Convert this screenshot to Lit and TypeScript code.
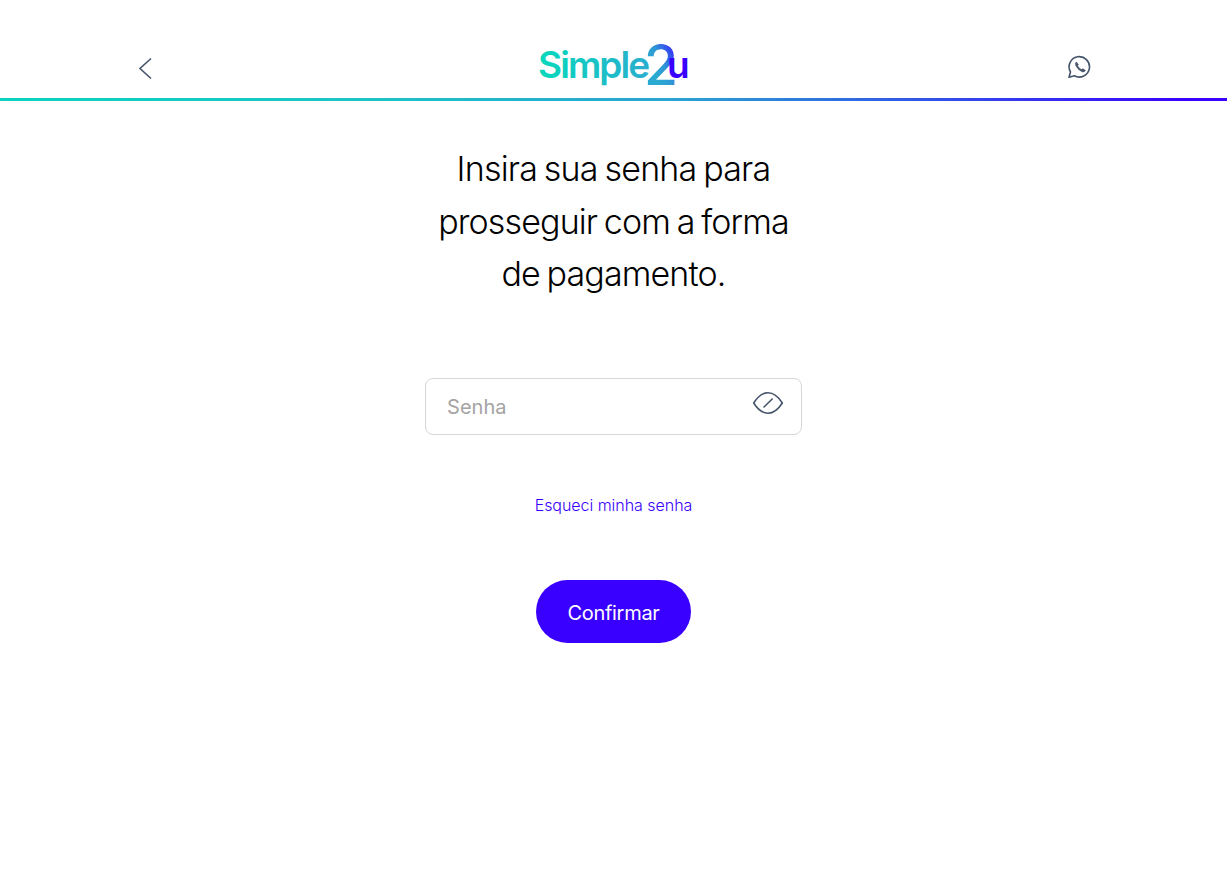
import { LitElement, html, css } from "lit";
import { customElement } from "lit/decorators.js";

@customElement("app-header")
class AppHeader extends LitElement {
  static styles = css`
    :host { display: block; }
    .bar { box-sizing: border-box; height: 98px; padding: 37px 133px 0 134px; display: flex; justify-content: space-between; align-items: flex-start; }
    .rule { height: 3px; background: linear-gradient(90deg, #0ad3bf 0%, #1cc4c4 30%, #2aa3d2 55%, #3a00ff 97%); }
    svg { display: block; }
    .icon { margin-top: 18px; }
    .logo { font-family: Inter, sans-serif; overflow: visible; margin-left: -1px; }
    .word { font-size: 37px; font-weight: 600; letter-spacing: -1.9px; }
    .two { font-size: 56px; font-weight: 500; }
  `;
  render() {
    return html`
      <div class="bar">
        <svg class="icon" width="26" height="26" viewBox="0 0 26 26" fill="none" stroke="#44546a" stroke-width="1.6">
          <path d="M17 3.5 6 13.5 17 23.5" />
        </svg>
        <svg class="logo" width="156" height="56" viewBox="535 37 156 56">
          <defs>
            <linearGradient id="w" gradientUnits="userSpaceOnUse" x1="539" y1="0" x2="648" y2="0">
              <stop offset="0" stop-color="#07d8bc" /><stop offset="1" stop-color="#2aaecf" />
            </linearGradient>
            <linearGradient id="t" gradientUnits="userSpaceOnUse" x1="651" y1="66" x2="675" y2="54">
              <stop offset="0" stop-color="#2aaad0" /><stop offset=".45" stop-color="#2f96d6" /><stop offset="1" stop-color="#3635f4" />
            </linearGradient>
          </defs>
          <text class="word" x="538" y="78" fill="url(#w)">Simple</text>
          <text class="two" x="644" y="85" fill="url(#t)" textLength="34" lengthAdjust="spacingAndGlyphs">2</text>
          <text class="word" x="667" y="78" fill="#3a00ff">u</text>
        </svg>
        <svg class="icon" width="28" height="26" viewBox="0 0 28 26" fill="none" stroke="#44546a" stroke-width="1.6" stroke-linejoin="round">
          <path d="M3 22.3 4.5 17A10.2 10.2 0 1 1 8.4 20.8Z" />
          <path d="M10.2 7Q8.8 8.4 9.800 10.600Q12.200 15.500 16.700 16.900Q18.600 17.200 19.500 15.500L16.900 13.700 15.300 14.600Q12.800 13.200 11.600 10.700L12.400 9.200Z" fill="#44546a" stroke-width=".6" />
        </svg>
      </div>
      <div class="rule"></div>
    `;
  }
}

@customElement("app-root")
class AppRoot extends LitElement {
  static styles = css`
    :host { display: block; min-height: 100vh; background: #fff; font-family: Inter, sans-serif; color: #000; }
    main { display: flex; flex-direction: column; align-items: center; }
    h1 { margin: 42px 0 0; font-size: 34px; font-weight: 300; line-height: 52.5px; text-align: center; }
    .line { display: block; white-space: nowrap; }
    .l1 { letter-spacing: -0.8px; word-spacing: -2px; }
    .l2 { letter-spacing: -0.88px; word-spacing: -2px; }
    .l3 { letter-spacing: -0.88px; word-spacing: -2px; }
    .field { box-sizing: border-box; width: 377px; height: 57px; margin-top: 77.5px; padding: 0 17px 0 21px; border: 1px solid #d6d6d6; border-radius: 8px; display: flex; align-items: center; justify-content: space-between; background: #fff; }
    input { width: 250px; padding: 0; border: 0; outline: 0; background: none; font: 400 20px/26px Inter, sans-serif; letter-spacing: 0.05px; }
    input::placeholder { color: #a5a3a3; opacity: 1; }
    .eye { margin-bottom: 7px; display: block; }
    a { margin-top: 59px; font-size: 16px; font-weight: 300; line-height: 22px; letter-spacing: -0.03px; color: #3a00ff; text-decoration: none; }
    button { margin-top: 64px; width: 155px; height: 63px; border: 0; border-radius: 32px; padding: 3px 0 0; background: #3a00ff; color: #fff; font: 400 20px/26px Inter, sans-serif; letter-spacing: -0.3px; }
  `;
  render() {
    return html`
      <app-header></app-header>
      <main>
        <h1>
          <span class="line l1">Insira sua senha para</span>
          <span class="line l2">prosseguir com a forma</span>
          <span class="line l3">de pagamento.</span>
        </h1>
        <div class="field">
          <input type="password" placeholder="Senha" />
          <svg class="eye" width="32" height="24" viewBox="0 0 32 24" fill="none" stroke="#44546a" stroke-width="1.6" stroke-linecap="round" stroke-linejoin="round">
            <path d="M1.7 12C5.5 6 10.5 1.8 16 1.8S26.500 6 30.300 12C26.500 18 21.500 22.200 16 22.200S5.500 18 1.700 12Z" />
            <path d="M12 16 20.200 8" />
          </svg>
        </div>
        <a href="#">Esqueci minha senha</a>
        <button>Confirmar</button>
      </main>
    `;
  }
}
